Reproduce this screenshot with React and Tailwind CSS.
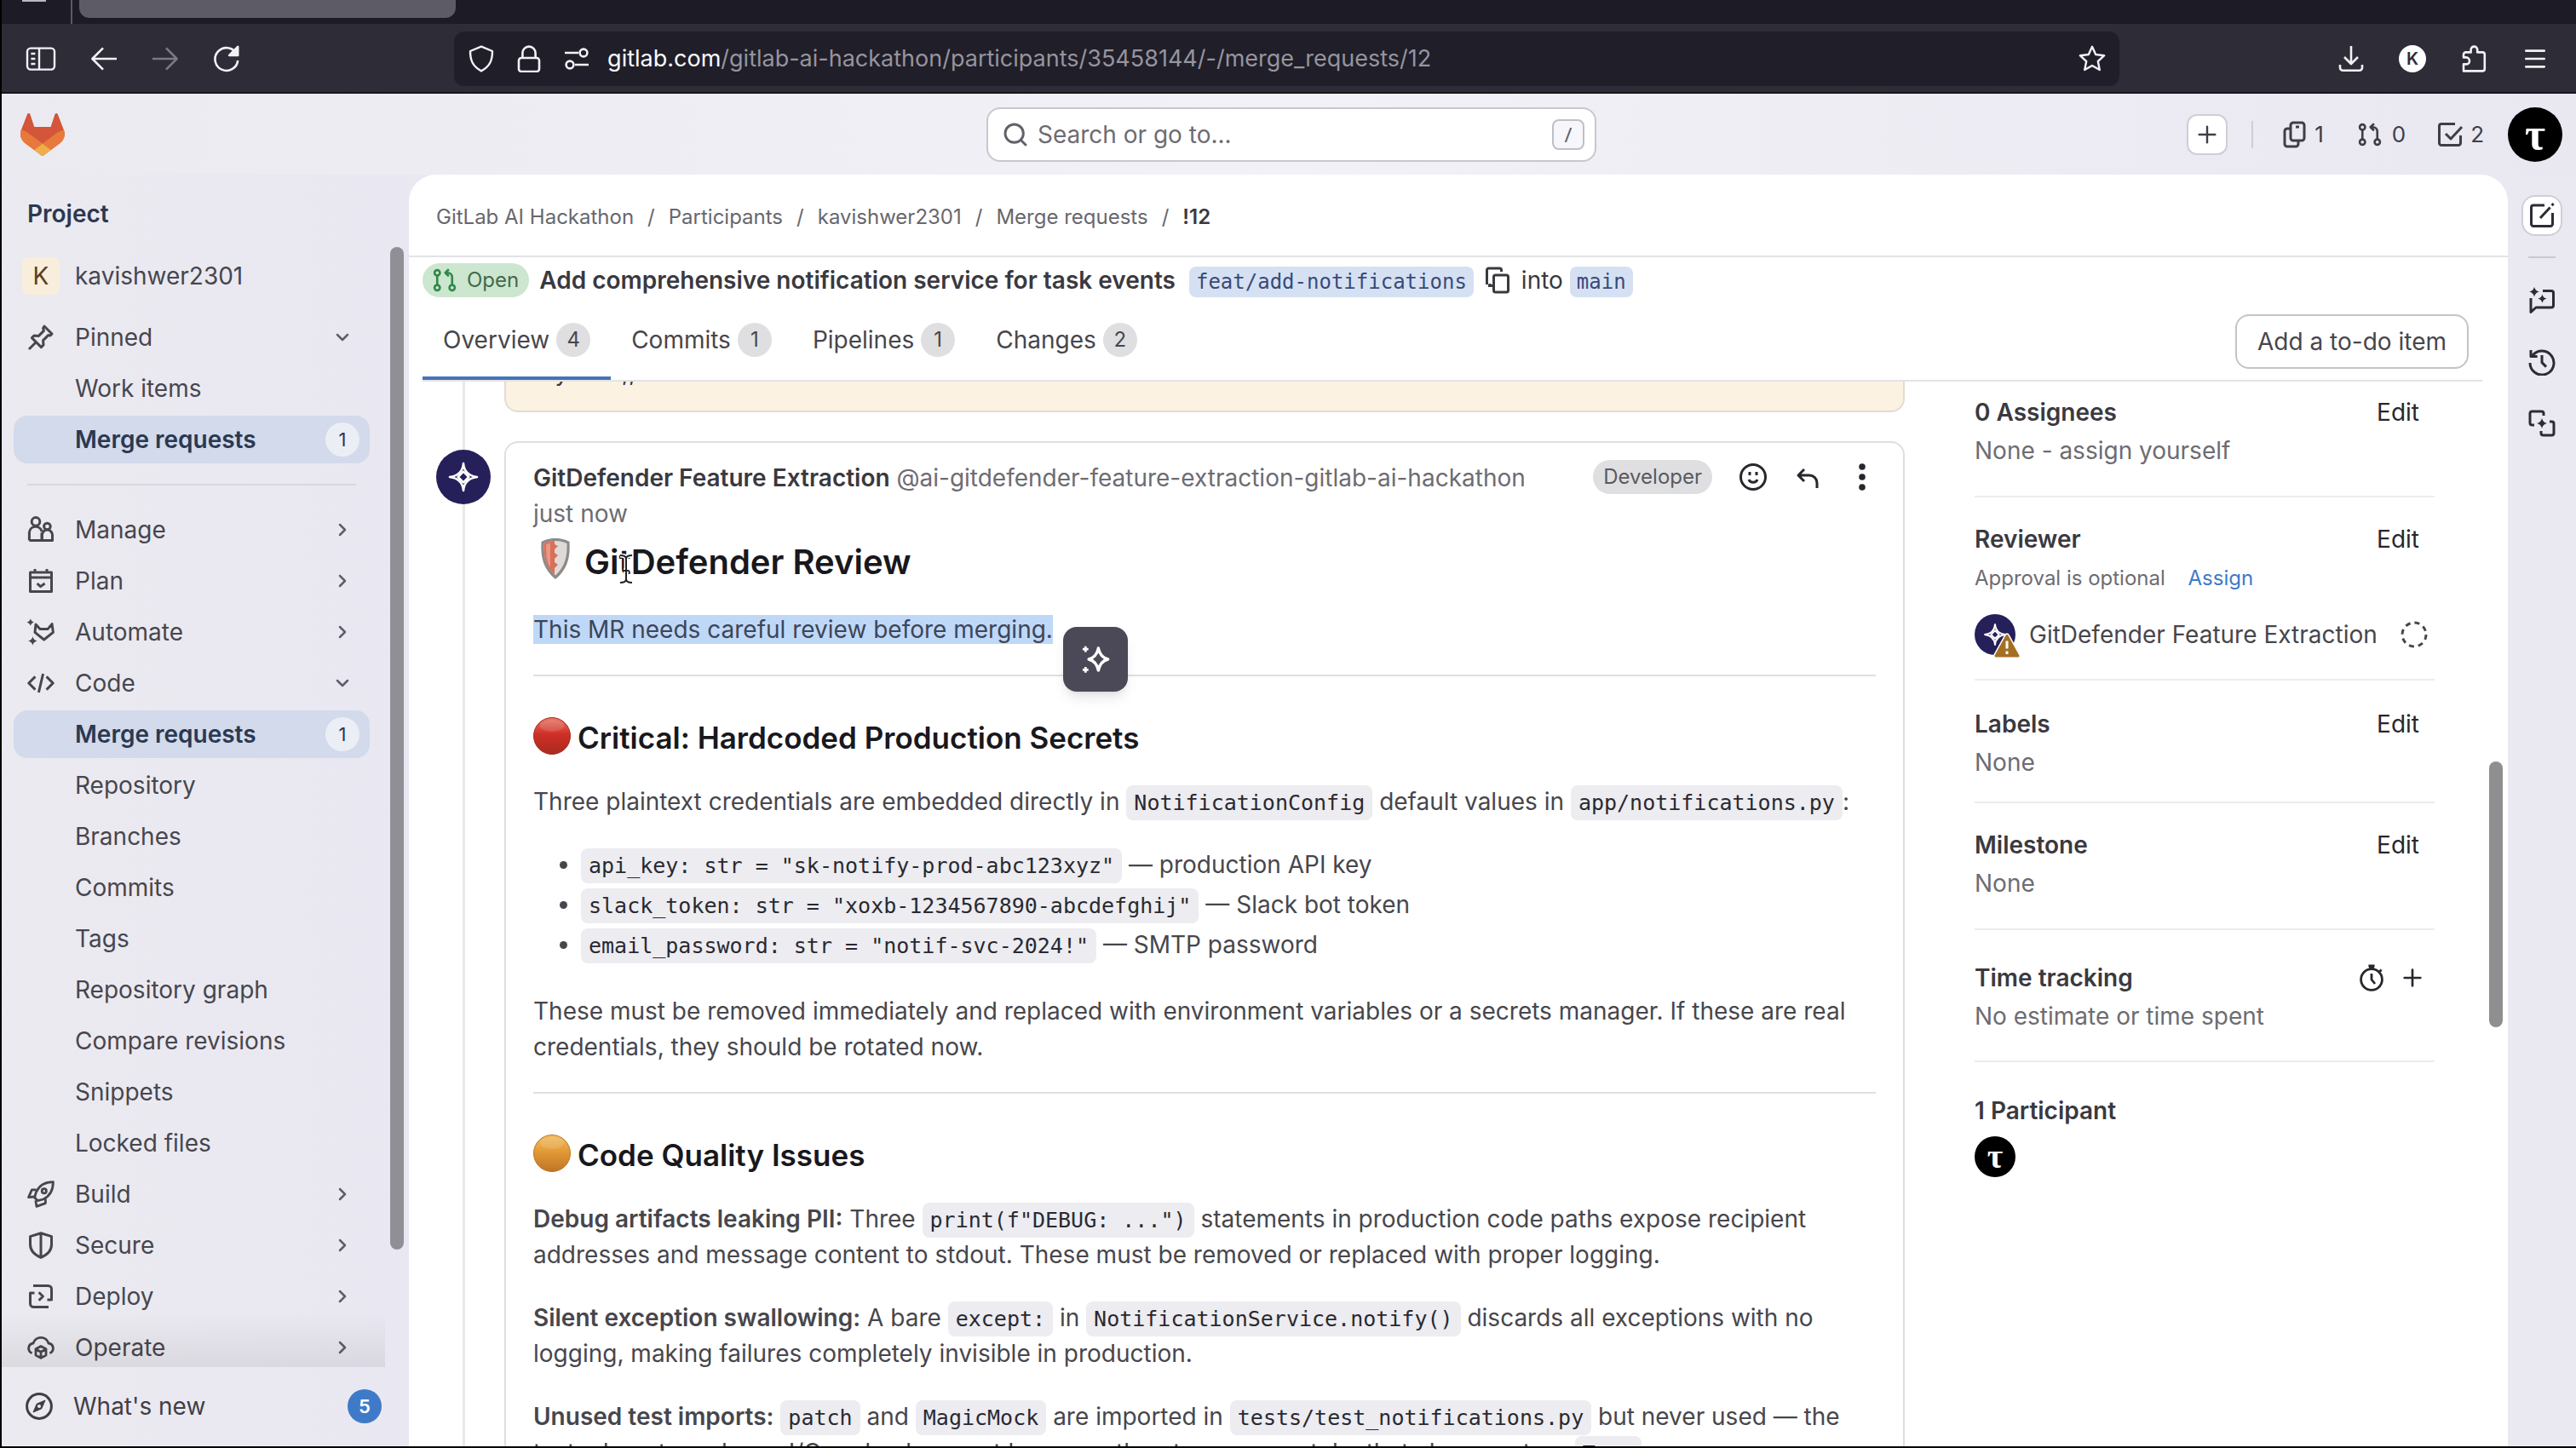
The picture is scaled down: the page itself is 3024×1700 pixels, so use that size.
import React from "react";
import { Menu, Plus, Search, ChevronDown, ChevronRight } from "lucide-react";

// 16-grid stroke icon wrapper
const Icon = ({ children, className = "w-8 h-8", sw = 1.5 }) => (
  <svg
    viewBox="0 0 16 16"
    className={`${className} shrink-0`}
    fill="none"
    stroke="currentColor"
    strokeWidth={sw}
    strokeLinejoin="round"
    aria-hidden="true"
  >
    {children}
  </svg>
);

const star4 = (x, y, r) =>
  `M${x} ${y - r}Q${x + r * 0.2} ${y - r * 0.2} ${x + r} ${y}Q${x + r * 0.2} ${y + r * 0.2} ${x} ${y + r}Q${x - r * 0.2} ${y + r * 0.2} ${x - r} ${y}Q${x - r * 0.2} ${y - r * 0.2} ${x} ${y - r}Z`;

const PinIcon = () => (
  <Icon>
    <path d="M1 15l4.5-4.5M10 1.5L14.5 6l-1 1-1.2-.2-3 3 .2 2.7-1.3 1.3L2.7 8.3 4 7l2.7.2 3-3L9.300 2.700z" />
  </Icon>
);

const ManageIcon = () => (
  <Icon>
    <circle cx="5" cy="3.200" r="2.400" />
    <path d="M1.200 14.250V9.800a3.700 3.700 0 0 1 7.300-.8M1.200 14.250h7.300V9.800" />
    <circle cx="11.700" cy="6" r="1.900" />
    <path d="M8.700 14.250v-3.200a3 3 0 0 1 6.050 0v3.200z" />
  </Icon>
);

const PlanIcon = () => (
  <Icon>
    <path d="M1.750 3h12.500v11.250H1.750zM1.750 6h12.500M4.500 1v2M11.500 1v2" />
    <path d="M5.800 9.500l2 1.800 2.500-1.800" />
  </Icon>
);

const AutomateIcon = () => (
  <Icon>
    <path d="M5 3.500L4.500 8.200l5.300 4.300 5.400-4.300-.7-4.900-2.400 2.900H7.500z" />
    <path d={star4(1.900, 2.300, 2)} fill="currentColor" stroke="none" />
    <path d={star4(3.200, 13.200, 2.600)} fill="currentColor" stroke="none" />
  </Icon>
);

const CodeIcon = () => (
  <Icon>
    <path d="M4.700 4.200L.9 8l3.800 3.800M11.300 4.200L15.100 8l-3.800 3.800M9.300 2.500l-2.600 11" />
  </Icon>
);

const RocketIcon = () => (
  <Icon sw={1.4}>
    <path d="M15.200 .8c-4.500 0-8 1.600-10 6L4.300 10l1.800 1.800 3.300-.8c4.200-2 5.800-5.500 5.800-10.200z" />
    <circle cx="9.900" cy="6.100" r="1.300" />
    <path d="M5.300 5.400H2.700L.8 9.800l3.400-.3M10.700 10.800v2.500l-5.200 1.900-.6-3.600" />
  </Icon>
);

const ShieldIcon = () => (
  <Icon>
    <path d="M8 .9L14.250 2.800v4.700c0 3.500-2.200 6-6.250 7.700-4-1.700-6.250-4.200-6.250-7.700V2.800zM8 1v14" />
  </Icon>
);

const DeployIcon = () => (
  <Icon>
    <path d="M3.500 1.750h8.750a2 2 0 0 1 2 2V10h-2.500M12.500 14.250H3.750a2 2 0 0 1-2-2V6h2.500M6.800 5.600L9.200 8l-2.400 2.400" />
  </Icon>
);

const OperateIcon = () => (
  <Icon sw={1.4}>
    <path d="M2.800 11.300A3 3 0 0 1 3.500 5.500 4.700 4.700 0 0 1 12.500 5.500a3 3 0 0 1 .7 5.800" />
    <path d="M8 7.300l3 1.600v3.600l-3 1.700-3-1.700V8.900zM5 9l3 1.600L11 9M8 10.600v3.500" />
  </Icon>
);

const CompassIcon = () => (
  <Icon>
    <circle cx="8" cy="8" r="7.200" />
    <path d="M11.500 4.500L9.400 9.400 4.500 11.500l2.100-4.900z" fill="currentColor" strokeWidth="0.5" />
    <circle cx="8" cy="8" r="1" fill="#ebeaf2" stroke="none" />
  </Icon>
);

const MergeIcon = ({ className }) => (
  <Icon className={className}>
    <circle cx="3" cy="3" r="1.800" />
    <circle cx="3" cy="13" r="1.800" />
    <circle cx="13" cy="13" r="1.800" />
    <path d="M3 4.800v6.400M13 11.200V6a3 3 0 0 0-3-3H8.500M10.800 .7L8.400 3l2.400 2.300" />
  </Icon>
);

const DuoStar = ({ className }) => (
  <svg viewBox="0 0 32 32" className={className} fill="none" stroke="white" strokeWidth="1.300" strokeLinejoin="round" aria-hidden="true">
    <path d="M16 8Q16.500 15 24 16 16.500 17 16 24 15.500 17 8 16 15.500 15 16 8z" />
    <path d="M16 12.800L19.200 16 16 19.200 12.800 16z" fill="#25205a" />
  </svg>
);

const Fox = () => (
  <svg viewBox="0 0 25 24" className="w-[52px] h-[50px]" aria-hidden="true">
    <path d="M24.507 9.500l-.034-.09L21.082.562a.896.896 0 0 0-1.694.091l-2.290 7.010H7.825L5.535.653a.898.898 0 0 0-1.694-.09L.451 9.411.416 9.500a6.297 6.297 0 0 0 2.090 7.278l.012.010.030.022 5.160 3.867 2.560 1.935 1.554 1.176a1.051 1.051 0 0 0 1.268 0l1.555-1.176 2.560-1.935 5.197-3.890.014-.010A6.297 6.297 0 0 0 24.507 9.500z" fill="#D3553A" />
    <path d="M24.507 9.500l-.034-.09a11.440 11.440 0 0 0-4.560 2.051l-7.447 5.632 4.742 3.584 5.197-3.890.014-.010A6.297 6.297 0 0 0 24.507 9.500z" fill="#E8783C" />
    <path d="M7.707 20.677l2.560 1.935 1.555 1.176a1.051 1.051 0 0 0 1.268 0l1.555-1.176 2.560-1.935-4.743-3.584-4.755 3.584z" fill="#EEAE4B" />
    <path d="M5.010 11.461a11.430 11.430 0 0 0-4.560-2.050L.416 9.500a6.297 6.297 0 0 0 2.090 7.278l.012.010.030.022 5.160 3.867 4.745-3.584-7.444-5.632z" fill="#E8783C" />
  </svg>
);

const NAV = [
  { label: "Manage", icon: <ManageIcon />, chevron: "right" },
  { label: "Plan", icon: <PlanIcon />, chevron: "right" },
  { label: "Automate", icon: <AutomateIcon />, chevron: "right" },
  { label: "Code", icon: <CodeIcon />, chevron: "down" },
  { label: "Merge requests", active: true, count: 1 },
  { label: "Repository" },
  { label: "Branches" },
  { label: "Commits" },
  { label: "Tags" },
  { label: "Repository graph" },
  { label: "Compare revisions" },
  { label: "Snippets" },
  { label: "Locked files" },
  { label: "Build", icon: <RocketIcon />, chevron: "right" },
  { label: "Secure", icon: <ShieldIcon />, chevron: "right" },
  { label: "Deploy", icon: <DeployIcon />, chevron: "right" },
  { label: "Operate", icon: <OperateIcon />, chevron: "right" },
];

const PINNED = [
  { label: "Pinned", icon: <PinIcon />, chevron: "down" },
  { label: "Work items" },
  { label: "Merge requests", active: true, count: 1 },
];

const TABS = [
  { label: "Overview", count: 4, active: true },
  { label: "Commits", count: 1 },
  { label: "Pipelines", count: 1 },
  { label: "Changes", count: 2 },
];

const CRUMBS = ["GitLab AI Hackathon", "Participants", "kavishwer2301", "Merge requests"];

const SECRETS = [
  { code: 'api_key: str = "sk-notify-prod-abc123xyz"', desc: "production API key" },
  { code: 'slack_token: str = "xoxb-1234567890-abcdefghij"', desc: "Slack bot token" },
  { code: 'email_password: str = "notif-svc-2024!"', desc: "SMTP password" },
];

const NavItem = ({ item }) => (
  <a
    href="#"
    className={
      item.active
        ? "flex items-center h-14 px-4 rounded-2xl bg-[#d2daeb] text-[#2b3850] font-semibold"
        : "flex items-center h-14 px-4 rounded-2xl text-[#47464e]"
    }
  >
    <span className="w-8 mr-6 flex shrink-0">{item.icon}</span>
    <span className="flex-1">{item.label}</span>
    {item.chevron === "right" && <ChevronRight className="w-6 h-6 mr-1 text-[#5f5e68]" strokeWidth={2.5} />}
    {item.chevron === "down" && <ChevronDown className="w-6 h-6 mr-1 text-[#5f5e68]" strokeWidth={2.5} />}
    {item.count && (
      <span className="w-10 h-10 -mr-1 rounded-full bg-[#eceef6] text-[22px] font-normal flex items-center justify-center">
        {item.count}
      </span>
    )}
  </a>
);

const Code = ({ children }) => (
  <code className="font-['DejaVu_Sans_Mono',monospace] text-[25px] leading-none text-[#2a292f] bg-[#ececf1] rounded-lg px-[9px] py-[6px]">
    {children}
  </code>
);

const Branch = ({ children }) => (
  <a href="#" className="mt-1 font-['DejaVu_Sans_Mono',monospace] text-[24px] leading-9 text-[#3a4a78] bg-[#d5e1f3] rounded-lg px-2">
    {children}
  </a>
);

const Ball = ({ id, top, mid, bottom }) => (
  <svg viewBox="0 0 44 44" className="w-11 h-11 mb-1 shrink-0" aria-hidden="true">
    <defs>
      <linearGradient id={id} x1="0" y1="0" x2="0" y2="1">
        <stop offset="0" stopColor={top} />
        <stop offset="0.45" stopColor={mid} />
        <stop offset="1" stopColor={bottom} />
      </linearGradient>
    </defs>
    <circle cx="22" cy="22" r="21.500" fill={`url(#${id})`} stroke={bottom} strokeWidth="1" />
    <ellipse cx="22" cy="10" rx="14" ry="7" fill="white" opacity="0.12" />
  </svg>
);

const ShieldEmoji = () => (
  <svg viewBox="0 0 36 50" className="w-9 h-[50px] mb-2 shrink-0" aria-hidden="true">
    <path d="M18 1C25 1 31 3 34.500 5c1 18-2 32-16.500 44C3.500 37 .5 23 1.500 5 5 3 11 1 18 1z" fill="#8d8a88" />
    <path d="M18 4c6 0 10.500 1.500 13.500 3 .5 15-2 27-13.500 37.500C6.500 34 4 22 4.500 7 7.500 5.500 12 4 18 4z" fill="#dedad8" />
    <path d="M17 4C12 4.300 8 5.300 4.500 7 4 22 6.500 34 17 43.500V36l4-4-4-3v-4l4-4-4-3v-4l4-4-4-2z" fill="#d9705a" />
    <path d="M7 8c-.5 12 1 21 5 27V6.500z" fill="#f0b3a4" opacity="0.6" />
  </svg>
);

const Tau = ({ className }) => (
  <span className={`${className} shrink-0 rounded-full bg-black text-white font-bold font-['Liberation_Serif',serif] flex items-center justify-center`}>
    τ
  </span>
);

const BrowserChrome = () => (
  <header className="shrink-0 bg-[#2e2c37] text-[#f2f1f6]">
    <div className="h-7 bg-[#1d1b26] flex items-start">
      <div className="w-[83px] h-7 border-r-2 border-[#5b5a64] pl-6">
        <div className="w-7 h-[2px] bg-[#b9b8c0]" />
      </div>
      <div className="w-[442px] h-[21px] ml-2 rounded-b-xl bg-[#5d5b66]" />
    </div>
    <div className="h-[82px] flex items-center pl-7 pr-8 pt-[2px] border-b-2 border-[#17161d]">
      <div className="flex-1 flex items-center gap-10">
        <button type="button" aria-label="Sidebar">
          <Icon className="w-9 h-8" sw={1.2}>
            <rect x="0" y="1.800" width="16" height="12.500" rx="2" />
            <path d="M7 2v12M2.200 5h2.500M2.200 8h2.500M2.200 11h2.500" />
          </Icon>
        </button>
        <button type="button" aria-label="Back">
          <Icon sw={1.3}><path d="M15.500 8H1.200M7.500 1.700L1.200 8l6.300 6.300" /></Icon>
        </button>
        <button type="button" aria-label="Forward" className="text-[#7b7984]">
          <Icon sw={1.3}><path d="M.5 8h14.300M8.500 1.700L14.800 8l-6.300 6.300" /></Icon>
        </button>
        <button type="button" aria-label="Reload">
          <Icon sw={1.3}>
            <path d="M13.800 5A6.700 6.700 0 1 0 14.600 9" />
            <path d="M14.600 1v5H9.600z" fill="currentColor" />
          </Icon>
        </button>
      </div>
      <div className="w-[66%] shrink-0 h-16 flex items-center rounded-xl bg-[#201e28] px-4 mr-64">
        <Icon sw={1.2}><path d="M8 .8L14.500 3.500C14.500 9 13 12.500 8 15.200 3 12.500 1.500 9 1.500 3.500z" /></Icon>
        <span className="w-6" />
        <Icon sw={1.3}>
          <rect x="2" y="7.500" width="12" height="8" rx="1.500" />
          <path d="M4.200 7.500V4.600a3.800 3.800 0 0 1 7.600 0v2.900" />
        </Icon>
        <span className="w-6" />
        <Icon sw={1.3}>
          <path d="M1 4.500h8M7 11.500h8" />
          <circle cx="12" cy="4.500" r="2.200" />
          <circle cx="4" cy="11.500" r="2.200" />
        </Icon>
        <span className="flex-1 ml-5 text-[27px] text-[#96949e]">
          <span className="text-[#fbfbfe]">gitlab.com</span>/gitlab-ai-hackathon/participants/35458144/-/merge_requests/12
        </span>
        <button type="button" aria-label="Bookmark">
          <Icon sw={1.2}>
            <path d="M8 .9l2.100 4.600 5 .6-3.700 3.400 1 5L8 12l-4.400 2.500 1-5L.9 6.100l5-.6z" />
          </Icon>
        </button>
      </div>
      <div className="flex items-center gap-10">
        <button type="button" aria-label="Downloads">
          <Icon sw={1.3}><path d="M8 .5v10M4 7l4 4 4-4M1.500 11.500v1.700a1.700 1.700 0 0 0 1.700 1.700h9.600a1.700 1.700 0 0 0 1.700-1.700v-1.700" /></Icon>
        </button>
        <span className="w-8 h-8 rounded-full bg-white text-[#2e2c37] text-[20px] font-semibold flex items-center justify-center">K</span>
        <button type="button" aria-label="Extensions">
          <Icon sw={1.3}>
            <path d="M2 15.200v-4h1.500a2 2 0 0 0 0-4H2V5.500A1.300 1.300 0 0 1 3.300 4.200h3V2.700a1.900 1.900 0 0 1 3.800 0v1.500h3a1.300 1.300 0 0 1 1.300 1.300v8.400a1.300 1.300 0 0 1-1.300 1.300z" />
          </Icon>
        </button>
        <button type="button" aria-label="Menu"><Menu className="w-8 h-8" strokeWidth={2} /></button>
      </div>
    </div>
  </header>
);

const TopBar = () => (
  <div className="h-[95px] shrink-0 flex items-center pl-[22px] pr-4 bg-linear-to-r from-[#ebeaf1] via-[#f2f1f7] to-[#e9e8f1]">
    <div className="flex-1"><Fox /></div>
    <label className="w-[24%] h-16 flex items-center rounded-2xl border-2 border-[#c8c7ce] bg-white pl-4 pr-3 text-[#626168]">
      <Search className="w-8 h-8" strokeWidth={2.2} />
      <input
        type="text"
        aria-label="Search"
        placeholder="Search or go to..."
        className="flex-1 ml-[10px] text-[28px] outline-none placeholder:text-[#6d6c73]"
      />
      <kbd className="w-[38px] h-9 rounded-lg border-2 border-[#c0bfc8] bg-[#f7f6fb] text-[24px] font-sans flex items-center justify-center">/</kbd>
    </label>
    <div className="flex-1 flex items-center justify-end text-[26px] text-[#3f3e47]">
      <button type="button" aria-label="Create new" className="w-12 h-12 rounded-xl border-2 border-[#cfced6] bg-white flex items-center justify-center">
        <Plus className="w-8 h-8" strokeWidth={1.8} />
      </button>
      <span className="w-[2px] h-8 bg-[#cfced8] ml-7 mr-8" />
      <a href="#" className="flex items-center gap-2">
        <Icon>
          <rect x="6" y="1" width="8" height="10.500" rx="1.500" />
          <path d="M6 4.500H4A1.500 1.500 0 0 0 2.500 6v7.500A1.500 1.500 0 0 0 4 15h5a1.500 1.500 0 0 0 1.500-1.500v-2M9 3.500h2" />
        </Icon>
        1
      </a>
      <a href="#" className="flex items-center gap-3 ml-10"><MergeIcon className="w-7 h-7" />0</a>
      <a href="#" className="flex items-center gap-2 ml-9">
        <Icon className="w-8 h-8">
          <path d="M11 1.750H3a1.250 1.250 0 0 0-1.250 1.250v10A1.250 1.250 0 0 0 3 14.250h10a1.250 1.250 0 0 0 1.250-1.250V8.500M5.500 7.500L8.500 10.500 15 3.500" />
        </Icon>
        2
      </a>
      <Tau className="w-16 h-16 text-[52px] ml-7" />
    </div>
  </div>
);

const Sidebar = () => (
  <nav aria-label="Project" className="w-[478px] shrink-0 flex flex-col text-[28px] bg-linear-to-r from-[#ebeaf0] to-[#e9e8f2]">
    <div className="relative flex-1 min-h-0 overflow-hidden pl-[14px] pr-[46px]">
      <h2 className="pl-4 pt-6 leading-[44px] font-semibold text-[#2b3850]">Project</h2>
      <a href="#" className="mt-[23px] h-14 flex items-center pl-[10px] text-[#47464e]">
        <span className="w-11 h-11 mr-[18px] rounded-lg bg-[#f8eedb] text-[#5c3f17] flex items-center justify-center">K</span>
        kavishwer2301
      </a>
      <div className="mt-4 flex flex-col gap-1">
        {PINNED.map((item) => (
          <NavItem key={item.label} item={item} />
        ))}
      </div>
      <hr className="mx-4 mt-6 mb-6 border-t-2 border-[#d9d8e0]" />
      <div className="flex flex-col gap-1">
        {NAV.map((item) => (
          <NavItem key={item.label} item={item} />
        ))}
      </div>
      <div className="absolute left-0 right-7 bottom-0 h-16 pointer-events-none bg-linear-to-b from-black/0 to-black/7" />
      <div className="absolute right-[6px] top-[85px] bottom-[138px] w-4 rounded-full bg-[#908f96]" />
    </div>
    <div className="h-[93px] overflow-hidden shrink-0 pl-[14px] pr-8 pt-[18px] text-[#3f3e47]">
      <a href="#" className="flex items-center h-14 pl-[14px]">
        <CompassIcon />
        <span className="flex-1 ml-6">What's new</span>
        <span className="w-10 h-10 rounded-full bg-[#3f7ac9] text-white text-[22px] font-semibold flex items-center justify-center">5</span>
      </a>
    </div>
  </nav>
);

const PageHeader = () => (
  <div className="shrink-0">
    <ol className="h-[97px] pt-1 flex items-center gap-4 pl-8 border-b-2 border-[#e3e3e6] text-[24px] text-[#68676d]">
      {CRUMBS.map((c) => (
        <li key={c} className="flex items-center gap-4">
          <a href="#">{c}</a>
          <span>/</span>
        </li>
      ))}
      <li className="font-semibold text-[#3a393f]">!12</li>
    </ol>
    <div className="ml-4 mr-[30px] border-b-2 border-[#e3e3e6]">
      <div className="flex items-center h-[54px] text-[28px] text-[#3a393f]">
        <span className="h-10 px-3 rounded-full bg-[#cde6cf] text-[#3f6b4c] text-[24px] flex items-center gap-3 mr-3">
          <MergeIcon className="w-7 h-7 text-[#2f8a4c]" />
          Open
        </span>
        <h1 className="font-semibold mr-4">Add comprehensive notification service for task events</h1>
        <Branch>feat/add-notifications</Branch>
        <button type="button" aria-label="Copy branch name" className="mx-3">
          <Icon>
            <rect x="5.750" y="5" width="8.500" height="10" rx="1" />
            <path d="M5.500 11.250H3.500V10M1.750 10.500V2A1 1 0 0 1 2.750 1h6.500a1 1 0 0 1 1 1v1M3.500 11.250h-1" />
          </Icon>
        </button>
        <span className="mr-2">into</span>
        <Branch>main</Branch>
      </div>
      <div className="flex items-center justify-between h-[90px] text-[28px] text-[#47464c]">
        <div className="flex h-full" role="tablist">
          {TABS.map((t) => (
            <button
              key={t.label}
              type="button"
              role="tab"
              className={
                t.active
                  ? "flex items-center gap-2 px-6 border-b-4 border-[#4573b8]"
                  : "flex items-center gap-2 px-6 border-b-4 border-transparent"
              }
            >
              {t.label}
              <span className="w-10 h-10 rounded-full bg-[#dfdfe1] text-[24px] flex items-center justify-center">{t.count}</span>
            </button>
          ))}
        </div>
        <button type="button" className="h-16 px-6 mr-4 rounded-2xl border-2 border-[#c4c3c8] bg-white">
          Add a to-do item
        </button>
      </div>
    </div>
  </div>
);

const Comment = () => (
  <article className="rounded-t-2xl border-2 border-b-0 border-[#dededf] px-8 pt-5 text-[28px] leading-[42px] text-[#47464c]">
    <div className="flex items-start justify-between">
      <div className="text-[#6d6c72]">
        <a href="#" className="font-semibold text-[#3a393f]">GitDefender Feature Extraction</a>{" "}
        @ai-gitdefender-feature-extraction-gitlab-ai-hackathon
        <br />
        just now
      </div>
      <div className="flex items-center text-[#28272d]">
        <span className="h-10 px-3 mr-8 rounded-full bg-[#dfdfe1] text-[24px] text-[#5a595f] flex items-center">Developer</span>
        <button type="button" aria-label="Add reaction" className="mr-8">
          <Icon>
            <circle cx="8" cy="8" r="7.250" />
            <path d="M5.500 9.500a2.700 2.700 0 0 0 5 0" />
            <path d="M6 5v2M10 5v2" />
          </Icon>
        </button>
        <button type="button" aria-label="Reply" className="mr-8">
          <Icon><path d="M6 3.500L2.500 7 6 10.500M2.800 7H9a4.500 4.500 0 0 1 4.500 4.500v3" /></Icon>
        </button>
        <button type="button" aria-label="More actions">
          <Icon>
            <g fill="currentColor" stroke="none">
              <circle cx="8" cy="2" r="1.900" />
              <circle cx="8" cy="8" r="1.900" />
              <circle cx="8" cy="14" r="1.900" />
            </g>
          </Icon>
        </button>
      </div>
    </div>

    <h2 className="mt-[10px] mb-8 h-[52px] pl-2 flex items-center gap-4 text-[40px] leading-[52px] font-semibold text-[#19181d]">
      <ShieldEmoji />
      <span className="relative">
        GitDefender Review
        {/* text cursor */}
        <svg viewBox="0 0 20 36" className="absolute left-[39px] top-[16px] w-5 h-9" fill="none" aria-hidden="true">
          <path d="M3 2c4 0 7 1 7 4v24c0 3-3 4-7 4M17 2c-4 0-7 1-7 4v24c0 3 3 4 7 4M7 20h6" stroke="white" strokeWidth="5" />
          <path d="M3 2c4 0 7 1 7 4v24c0 3-3 4-7 4M17 2c-4 0-7 1-7 4v24c0 3 3 4 7 4M7 20h6" stroke="#222" strokeWidth="2" />
        </svg>
      </span>
    </h2>

    <p className="mb-8 flex">
      <span className="relative">
        <mark className="bg-[#bfd8f8] text-[#3d4657]">This MR needs careful review before merging.</mark>
        <button
          type="button"
          aria-label="Ask Duo"
          className="absolute left-full top-[18px] ml-3 w-[76px] h-[76px] rounded-2xl bg-[#4b4957] text-white flex items-center justify-center shadow-lg"
        >
          <Icon className="w-9 h-9">
            <path d="M9.500 2.200Q10.500 7 14.500 8 10.500 9 9.500 13.800 8.500 9 4.500 8 8.500 7 9.500 2.200z" />
            <path d="M2.800 1.200v3M1.300 2.700h3M2.800 12v3M1.300 13.500h3" strokeWidth="1.200" />
          </Icon>
        </button>
      </span>
    </p>
    <hr className="border-t-2 border-[#e0e0e2]" />

    <h3 className="mt-[50px] mb-8 h-11 flex items-center gap-2 text-[35px] leading-[44px] font-semibold text-[#19181d]">
      <Ball id="red" top="#e8796b" mid="#cf2f26" bottom="#a82a20" />
      Critical: Hardcoded Production Secrets
    </h3>
    <p className="mb-8">
      Three plaintext credentials are embedded directly in <Code>NotificationConfig</Code> default values in{" "}
      <Code>app/notifications.py</Code>:
    </p>
    <ul className="mb-9 pl-14 flex flex-col gap-[5px] list-disc">
      {SECRETS.map((s) => (
        <li key={s.code}>
          <Code>{s.code}</Code> — {s.desc}
        </li>
      ))}
    </ul>
    <p className="mb-8">
      These must be removed immediately and replaced with environment variables or a secrets manager. If these are real
      credentials, they should be rotated now.
    </p>
    <hr className="border-t-2 border-[#e0e0e2]" />

    <h3 className="mt-[50px] mb-8 h-11 flex items-center gap-2 text-[35px] leading-[44px] font-semibold text-[#19181d]">
      <Ball id="orange" top="#f0bd62" mid="#e39a35" bottom="#bf7425" />
      Code Quality Issues
    </h3>
    <p className="mb-8">
      <strong className="font-semibold">Debug artifacts leaking PII:</strong> Three <Code>print(f"DEBUG: ...")</Code>{" "}
      statements in production code paths expose recipient addresses and message content to stdout. These must be removed
      or replaced with proper logging.
    </p>
    <p className="mb-8">
      <strong className="font-semibold">Silent exception swallowing:</strong> A bare <Code>except:</Code> in{" "}
      <Code>NotificationService.notify()</Code> discards all exceptions with no logging, making failures completely
      invisible in production.
    </p>
    <p>
      <strong className="font-semibold">Unused test imports:</strong> <Code>patch</Code> and <Code>MagicMock</Code> are
      imported in <Code>tests/test_notifications.py</Code> but never used — the tests do not mock any I/O and only assert
      happy-path outcomes on stubs that always return <Code>True</Code>.
    </p>
  </article>
);

const Block = ({ title, action, children, className = "" }) => (
  <section className={`${className} border-b-2 border-[#ececee]`}>
    <div className="flex items-center justify-between leading-[44px] pr-[18px]">
      <h3 className="font-semibold text-[#3a393f]">{title}</h3>
      {action || <button type="button" className="text-[#28272d]">Edit</button>}
    </div>
    {children}
  </section>
);

const Details = () => (
  <aside className="w-[540px] shrink-0 ml-[82px] mr-[86px] text-[28px] text-[#6d6c72]">
    <Block title="0 Assignees" className="pt-[14px] pb-[30px]">
      <p className="leading-[46px]">None - <button type="button">assign yourself</button></p>
    </Block>
    <Block title="Reviewer" className="pt-[27px] pb-6">
      <p className="text-[24px] leading-[48px]">
        Approval is optional <a href="#" className="ml-5 text-[#3f7ac9]">Assign</a>
      </p>
      <div className="mt-[14px] h-14 flex items-center text-[#47464c]">
        <span className="relative w-12 h-12 mr-4 rounded-full bg-[#25205a]">
          <DuoStar className="w-12 h-12" />
          <svg viewBox="0 0 32 30" className="absolute left-[22px] top-[22px] w-8 h-[30px]" aria-hidden="true">
            <path d="M16 3.500L29 27H3z" fill="#a56f22" stroke="white" strokeWidth="6" strokeLinejoin="round" />
            <path d="M16 3.500L29 27H3z" fill="#a56f22" stroke="#a56f22" strokeWidth="3" strokeLinejoin="round" />
            <path d="M16 9.500v9M16 21.500v3.500" stroke="white" strokeWidth="3" />
          </svg>
        </span>
        <span className="flex-1">GitDefender Feature Extraction</span>
        <Icon className="w-8 h-8 mr-2"><circle cx="8" cy="8" r="7" strokeDasharray="3 2.500" /></Icon>
      </div>
    </Block>
    <Block title="Labels" className="pt-[29px] pb-[23px]">
      <p className="leading-[46px]">None</p>
    </Block>
    <Block title="Milestone" className="pt-[27px] pb-[30px]">
      <p className="leading-[46px]">None</p>
    </Block>
    <Block
      title="Time tracking"
      className="pt-[34px] pb-[29px]"
      action={
        <span className="flex items-center gap-4 text-[#28272d] -mr-2">
          <button type="button" aria-label="Set estimate">
            <Icon sw={1.4}>
              <circle cx="8" cy="9" r="6.200" />
              <path d="M8 5.500V9l2 2.500M6.200 .9h3.600M8 .8v2M12.800 3.200l1 1" />
              <path d="M6.500 1.500h3" strokeWidth="2" />
            </Icon>
          </button>
          <button type="button" aria-label="Add time entry"><Plus className="w-8 h-8" strokeWidth={2} /></button>
        </span>
      }
    >
      <p className="leading-[46px]">No estimate or time spent</p>
    </Block>
    <div className="pt-[35px]">
      <h3 className="leading-[44px] font-semibold text-[#3a393f]">1 Participant</h3>
      <Tau className="mt-2 w-12 h-12 text-[40px]" />
    </div>
  </aside>
);

const Rail = () => (
  <div className="w-20 shrink-0 flex flex-col items-center pt-6 bg-[#eae9f1] text-[#2d2c36]">
    <button type="button" aria-label="New item" className="w-12 h-12 rounded-2xl border-2 border-[#cfced6] bg-white flex items-center justify-center">
      <Icon>
        <path d="M9.500 2H3a1.250 1.250 0 0 0-1.250 1.250V13A1.250 1.250 0 0 0 3 14.250h10A1.250 1.250 0 0 0 14.250 13V6.500M7 9.500l5.800-6.300M13.800 2.100l1-1.100" />
      </Icon>
    </button>
    <span className="w-8 h-[2px] my-6 bg-[#c9c8d0]" />
    <div className="mt-[10px] flex flex-col gap-10">
      <button type="button" aria-label="Duo chat">
        <Icon>
          <path d="M8.500 2.250h5a1.250 1.250 0 0 1 1.250 1.250v7.250A1.250 1.250 0 0 1 13.500 12H4.500l-3 2.700V6.500" />
          <path d={star4(3.500, 2.800, 2.900)} fill="currentColor" stroke="none" />
          <path d={star4(8.200, 6.800, 2.600)} fill="currentColor" stroke="none" />
        </Icon>
      </button>
      <button type="button" aria-label="History">
        <Icon>
          <path d="M2.500 4.200A7 7 0 1 1 1 8.500M1.500 1v3.800h3.800M8 4v4.300l2.500 2.500" />
        </Icon>
      </button>
      <button type="button" aria-label="Suggestions">
        <Icon>
          <path d="M9 3.500V2.250A1.250 1.250 0 0 0 7.750 1H2.250A1.250 1.250 0 0 0 1 2.250v5.500A1.250 1.250 0 0 0 2.250 9H3.500M12.500 7h1.250A1.250 1.250 0 0 1 15 8.250v5.500A1.250 1.250 0 0 1 13.750 15h-5a1.250 1.250 0 0 1-1.250-1.250V12.500" />
          <path d={star4(8, 8, 3)} fill="currentColor" stroke="none" />
        </Icon>
      </button>
    </div>
  </div>
);

const App = () => {
  return (
    <div className="h-screen overflow-hidden flex flex-col border-l-2 border-b-2 border-black bg-[#eae9f1] font-[Inter,sans-serif]">
      <BrowserChrome />
      <TopBar />
      <div className="flex-1 min-h-0 flex">
        <Sidebar />
        <main className="relative flex-1 min-w-0 flex flex-col bg-white rounded-t-[32px] overflow-hidden">
          <PageHeader />
          <div className="flex-1 min-h-0 overflow-hidden flex">
            <div className="flex-1 min-w-0 flex pl-8 gap-4">
              {/* timeline */}
              <div className="w-16 shrink-0 flex flex-col items-center">
                <span className="w-[3px] h-20 bg-[#e8e8ea]" />
                <span className="w-16 h-16 rounded-full bg-[#25205a] flex items-center justify-center">
                  <DuoStar className="w-16 h-16" />
                </span>
                <span className="w-[3px] flex-1 bg-[#e8e8ea]" />
              </div>
              <div className="flex-1 min-w-0 flex flex-col">
                <div className="h-9 mb-[34px] shrink-0 overflow-hidden flex flex-col justify-end rounded-b-2xl border-2 border-t-0 border-[#e2ddd2] bg-[#fbf2e2] pl-8 pb-6 text-[28px] leading-[42px] text-[#3a393f]">
                  <p>My sets,,</p>
                </div>
                <Comment />
              </div>
            </div>
            <Details />
          </div>
          <div className="absolute right-[6px] top-[689px] w-4 h-[312px] rounded-full bg-[#8f8f91]" />
        </main>
        <Rail />
      </div>
    </div>
  );
};

export default App;
